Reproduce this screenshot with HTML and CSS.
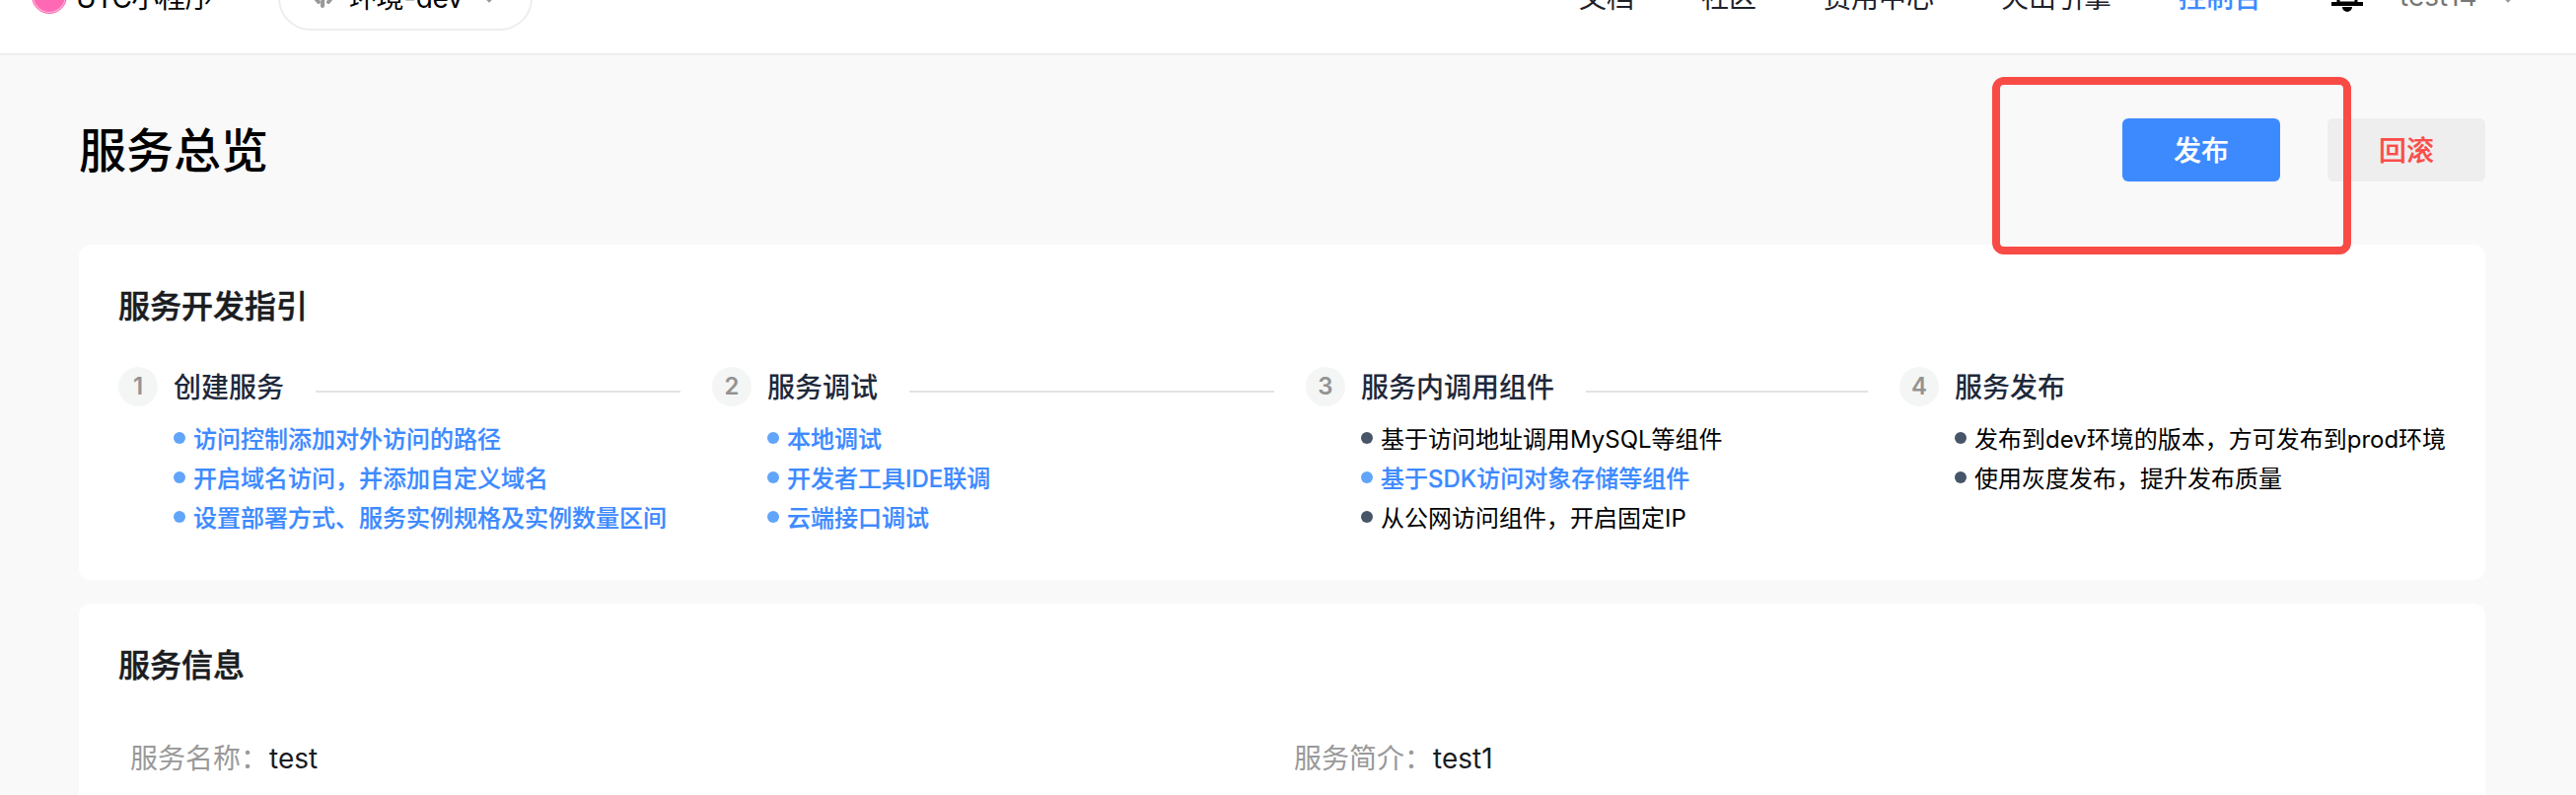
FILE: index.html
```html
<!DOCTYPE html>
<html lang="zh-CN">
<head>
    <meta charset="UTF-8">
    <meta name="viewport" content="width=device-width, initial-scale=1.0">
    <title>服务总览</title>
    <link rel="stylesheet" href="styles.css">
</head>
<body>
    <div class="header">
        <div class="header-inner">
            <div class="brand">
                <span class="avatar">UTC</span>
                <span class="brand-name">UTC小程序</span>
            </div>
            <div class="env-select">
                <svg class="env-icon" width="24" height="24" viewBox="0 0 24 24">
                    <path d="M12 3L11 22M2 12l5 6M22 12l-5 6" fill="none" stroke="#999" stroke-width="4" stroke-linecap="round"/>
                </svg>
                <span class="env-name">环境-dev</span>
                <svg class="arrow" width="12" height="8" viewBox="0 0 12 8"><path d="M1 1l5 5 5-5" fill="none" stroke="#999" stroke-width="2.5"/></svg>
            </div>
            <div class="nav">
                <a>文档</a>
                <a>社区</a>
                <a>费用中心</a>
                <a>火山引擎</a>
                <a class="active">控制台</a>
                <svg class="bell" width="32" height="32" viewBox="0 0 32 32">
                    <path d="M16 3a9 9 0 0 0-9 9v11h18V12a9 9 0 0 0-9-9z" fill="none" stroke="#000" stroke-width="3"/>
                    <path d="M0 22h32v4H0zM11 27h10a5 5 0 0 1-10 0z" fill="#000"/>
                </svg>
                <span class="user">test14</span>
                <svg class="arrow" width="12" height="8" viewBox="0 0 12 8"><path d="M1 1l5 5 5-5" fill="none" stroke="#999" stroke-width="2.5"/></svg>
            </div>
        </div>
    </div>

    <div class="container">
        <div class="page-head">
            <h1>服务总览</h1>
            <div class="actions">
                <button class="btn btn-primary">发布</button>
                <button class="btn btn-danger">回滚</button>
                <div class="highlight"></div>
            </div>
        </div>

        <div class="card guide">
            <h2>服务开发指引</h2>
            <div class="steps">
                <div class="step">
                    <div class="step-head"><span class="num">1</span><h3>创建服务</h3><i class="line"></i></div>
                    <ul>
                        <li class="link">访问控制添加对外访问的路径</li>
                        <li class="link">开启域名访问，并添加自定义域名</li>
                        <li class="link">设置部署方式、服务实例规格及实例数量区间</li>
                    </ul>
                </div>
                <div class="step">
                    <div class="step-head"><span class="num">2</span><h3>服务调试</h3><i class="line"></i></div>
                    <ul>
                        <li class="link">本地调试</li>
                        <li class="link">开发者工具IDE联调</li>
                        <li class="link">云端接口调试</li>
                    </ul>
                </div>
                <div class="step">
                    <div class="step-head"><span class="num">3</span><h3>服务内调用组件</h3><i class="line"></i></div>
                    <ul>
                        <li>基于访问地址调用MySQL等组件</li>
                        <li class="link">基于SDK访问对象存储等组件</li>
                        <li>从公网访问组件，开启固定IP</li>
                    </ul>
                </div>
                <div class="step">
                    <div class="step-head"><span class="num">4</span><h3>服务发布</h3></div>
                    <ul>
                        <li>发布到dev环境的版本，方可发布到prod环境</li>
                        <li>使用灰度发布，提升发布质量</li>
                    </ul>
                </div>
            </div>
        </div>

        <div class="card info">
            <h2>服务信息</h2>
            <div class="fields">
                <div class="field"><span class="label">服务名称：</span><span class="value">test</span></div>
                <div class="field"><span class="label">服务简介：</span><span class="value">test1</span></div>
            </div>
        </div>
    </div>
</body>
</html>
```
FILE: styles.css
```css
* {
    box-sizing: border-box;
}
body {
    margin: 0;
    height: 806px;
    overflow: hidden;
    background: #f9f9f9;
    color: #000;
    font-family: Inter, "Noto Sans CJK SC", sans-serif;
}
h1, h2, h3, ul {
    margin: 0;
    padding: 0;
    font-weight: 500;
}
.header {
    display: flex;
    align-items: flex-end;
    height: 56px;
    background: #fff;
    border-bottom: 2px solid #ededed;
}
.header-inner {
    display: flex;
    align-items: center;
    flex: none;
    width: 100%;
    height: 112px;
    padding: 0 63px 0 32px;
}
.brand {
    display: flex;
    align-items: center;
    width: 250px;
    padding-bottom: 4px;
    font-size: 28px;
    letter-spacing: -0.8px;
    white-space: nowrap;
}
.avatar {
    width: 36px;
    height: 36px;
    margin-right: 9px;
    border: 1px solid #ff69b4;
    border-radius: 50%;
    background: #ff69b4;
    box-shadow: inset 0 0 0 1px #ffc4e0;
    color: #fff;
    font-size: 12px;
    line-height: 34px;
    text-align: center;
}
.env-select {
    display: flex;
    align-items: center;
    width: 258px;
    height: 66px;
    padding: 0 0 4px 32px;
    border: 2px solid #ededed;
    border-radius: 33px;
    font-size: 28px;
    white-space: nowrap;
}
.env-name {
    width: 112px;
    margin: 0 24px 0 14px;
    letter-spacing: -0.4px;
}
.arrow {
    margin-top: 6px;
}
.nav {
    display: flex;
    align-items: center;
    margin-left: auto;
    padding-bottom: 4px;
    color: #1d2129;
    font-size: 28px;
}
.nav a {
    margin-right: 68px;
}
.nav .active {
    margin-right: 71px;
    color: #3d8aff;
    font-weight: 500;
}
.bell {
    margin-right: 37px;
}
.user {
    width: 80px;
    margin-right: 24px;
    color: #777;
}
.container {
    padding: 0 92px 0 80px;
}
.page-head {
    display: flex;
    align-items: center;
    justify-content: space-between;
    height: 192px;
}
h1 {
    padding-top: 2px;
    font-size: 48px;
    line-height: 64px;
}
.actions {
    position: relative;
    display: flex;
    gap: 48px;
}
.btn {
    width: 160px;
    height: 64px;
    padding: 0 0 2px;
    border: 0;
    border-radius: 6px;
    font-family: inherit;
    font-size: 28px;
    font-weight: 500;
    -webkit-text-stroke: 0.2px;
}
.btn-primary {
    background: #3d8aff;
    color: #fff;
}
.btn-danger {
    background: #eee;
    color: #f94d4a;
}
/* callout frame round the publish button */
.highlight {
    position: absolute;
    top: -42px;
    left: -132px;
    width: 364px;
    height: 180px;
    border: 8px solid #f84b46;
    border-radius: 12px;
}
.card {
    padding: 39px 24px 0 40px;
    border-radius: 12px;
    background: #fff;
}
h2 {
    color: #1a1c1f;
    font-size: 32px;
    line-height: 48px;
    -webkit-text-stroke: 0.5px;
}
.guide {
    height: 340px;
    margin-bottom: 24px;
}
.steps {
    display: grid;
    grid-template-columns: repeat(4, 1fr);
    gap: 32px;
    margin-top: 37px;
}
.step-head {
    display: flex;
    align-items: center;
    height: 40px;
}
.num {
    width: 40px;
    height: 40px;
    margin-right: 16px;
    border-radius: 50%;
    background: #f4f6f5;
    color: #939393;
    font-size: 24px;
    font-weight: 600;
    line-height: 40px;
    text-align: center;
}
h3 {
    padding-top: 1px;
    color: #1e293b;
    font-size: 28px;
    line-height: 40px;
}
.line {
    flex: 1;
    height: 2px;
    margin: 10px 0 0 32px;
    background: #e3e3e3;
}
.step ul {
    margin-top: 12px;
    padding-left: 56px;
    list-style: none;
}
.step li {
    display: flex;
    align-items: center;
    height: 40px;
    padding-bottom: 2px;
    font-size: 24px;
    font-weight: 400;
    white-space: nowrap;
}
.step li::before {
    content: "";
    width: 12px;
    height: 12px;
    margin: 2px 8px 0 0;
    border-radius: 50%;
    background: #475569;
}
.step .link {
    color: #3d8aff;
    font-weight: 500;
    -webkit-text-stroke: 0.2px;
}
.step .link::before {
    background: #60a5fa;
}
.info {
    height: 194px;
    border-radius: 12px 12px 0 0;
}
.fields {
    display: grid;
    grid-template-columns: 1180px 1fr;
    margin-top: 50px;
    padding-left: 12px;
    font-size: 28px;
    line-height: 40px;
}
.label {
    color: #999;
}
.value {
    margin-left: 1px;
    color: #1a1c1f;
}
```
